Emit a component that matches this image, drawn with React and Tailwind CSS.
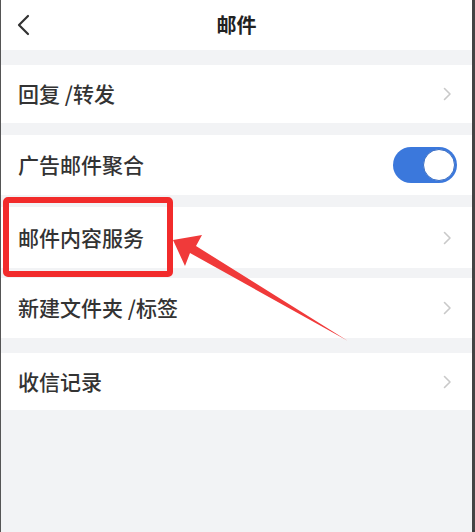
import React from "react";

const Chevron = () => (
  <svg width="9" height="14" viewBox="0 0 9 14" fill="none">
    <path d="M1.5 1.5L7 7l-5.5 5.5" stroke="#c9c9c9" strokeWidth="1.6" strokeLinecap="round" strokeLinejoin="round" />
  </svg>
);

function Row({ label, h, right }) {
  return (
    <div className={`flex items-center justify-between bg-white pl-[17px] pr-[20px] ${h}`}>
      <span className="text-[21px] font-medium text-[#333]">{label}</span>
      {right || <Chevron />}
    </div>
  );
}

export default function App() {
  return (
    <div
      className="relative h-[532px] w-[475px] overflow-hidden border-l border-r-[3px] border-l-[#555] border-r-[#444] bg-[#f2f3f5]"
      style={{ fontFamily: '"Noto Sans CJK SC", "Noto Sans", sans-serif' }}
    >
      {/* header */}
      <div className="relative flex h-[50px] items-center justify-center bg-white">
        <svg className="absolute left-[15px] top-[14px]" width="16" height="22" viewBox="0 0 16 22" fill="none">
          <path d="M12 2L3 11l9 9" stroke="#333" strokeWidth="2.2" strokeLinecap="round" strokeLinejoin="round" />
        </svg>
        <span className="text-[20px] font-bold text-[#222]">邮件</span>
      </div>

      <div className="mt-[15px] flex flex-col">
        <Row label="回复 /转发" h="h-[58px]" />
        <div className="mt-[12px]">
          <Row
            label="广告邮件聚合"
            h="h-[60px]"
            right={
              <div className="mr-[-5px] flex h-[36px] w-[64px] items-center justify-end rounded-full bg-[#3b78dc] p-[2px]">
                <div className="h-[32px] w-[32px] rounded-full border border-[#3b6fc4] bg-white" />
              </div>
            }
          />
        </div>
        <div className="mt-[12px]">
          <Row label="邮件内容服务" h="h-[61px]" />
        </div>
        <div className="mt-[10px]">
          <Row label="新建文件夹 /标签" h="h-[60px]" />
        </div>
        <div className="mt-[15px]">
          <Row label="收信记录" h="h-[57px]" />
        </div>
      </div>

      {/* annotation */}
      <div className="absolute left-[2px] top-[197px] h-[80px] w-[170px] rounded-[5px] border-[6px] border-[#f22b2b]" />
      <svg className="absolute left-0 top-0" width="475" height="532" viewBox="0 0 475 532">
        <polygon
          points="172,240 201,235 195,246 347,341 189,253 184,266"
          fill="#f03a3a"
        />
      </svg>
    </div>
  );
}
